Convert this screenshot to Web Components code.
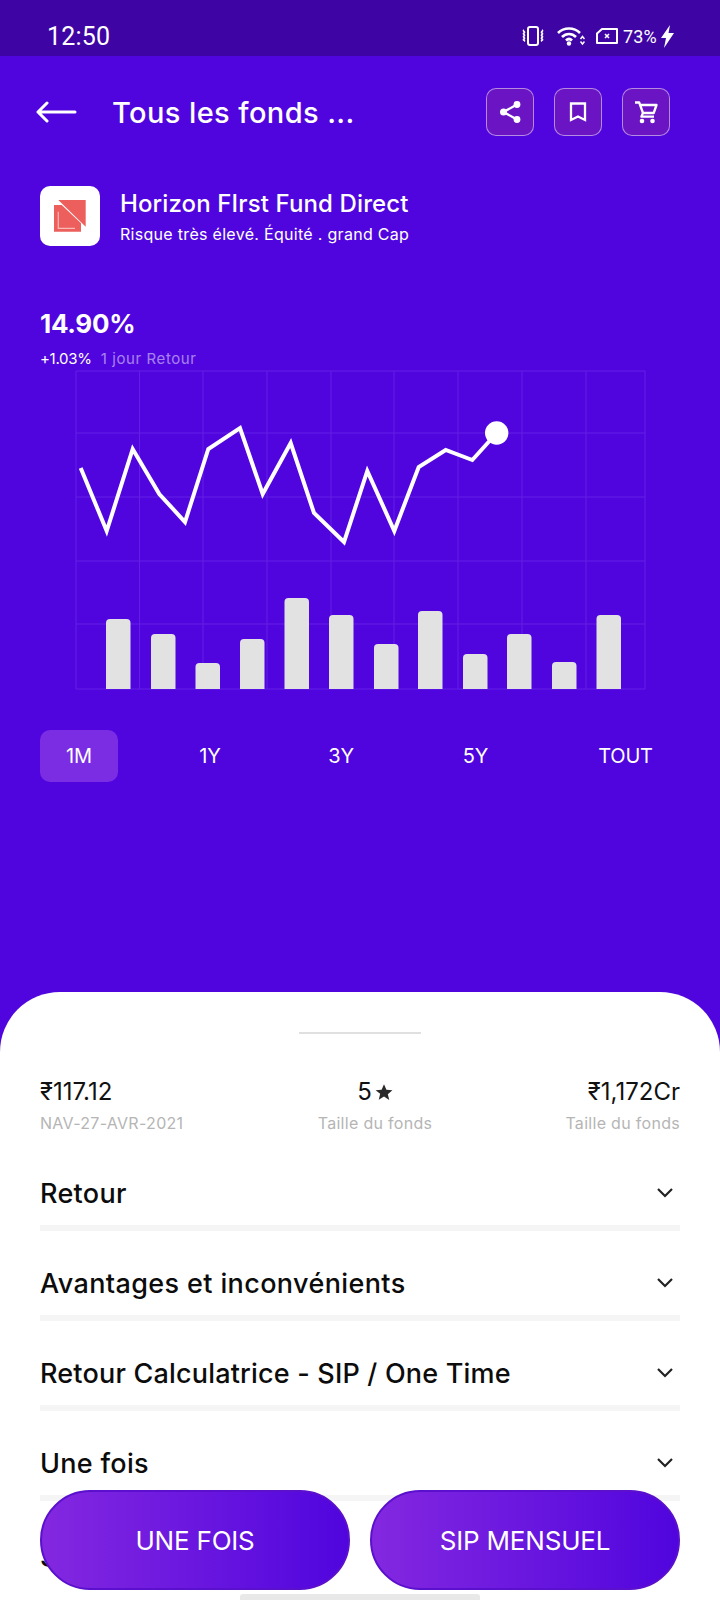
<!DOCTYPE html>
<html lang="fr">
<head>
<meta charset="utf-8">
<title>Horizon First Fund Direct</title>
<style>
  html, body { margin: 0; padding: 0; }
  body {
    width: 720px;
    height: 1600px;
    overflow: hidden;
    position: relative;
    display: flex;
    flex-direction: column;
    background: #5005de;
    font-family: Inter, "Noto Sans", sans-serif;
  }
</style>
</head>
<body>
  <status-bar></status-bar>
  <app-header title-text="Tous les fonds ...">
    <icon-button icon="share"></icon-button>
    <icon-button icon="bookmark"></icon-button>
    <icon-button icon="cart"></icon-button>
  </app-header>
  <fund-info name="Horizon FIrst Fund Direct" meta="Risque très élevé. Équité . grand Cap"></fund-info>
  <return-summary value="14.90%" change="+1.03%" label="1 jour Retour"></return-summary>
  <fund-chart></fund-chart>
  <range-tabs>
    <button slot="tab" aria-selected="true">1M</button>
    <button slot="tab">1Y</button>
    <button slot="tab">3Y</button>
    <button slot="tab">5Y</button>
    <button slot="tab">TOUT</button>
  </range-tabs>
  <detail-sheet>
    <stat-item slot="stats" value="₹117.12" label="NAV-27-AVR-2021"></stat-item>
    <stat-item slot="stats" value="5" star label="Taille du fonds" align="center"></stat-item>
    <stat-item slot="stats" value="₹1,172Cr" label="Taille du fonds" align="end"></stat-item>
    <accordion-row>Retour</accordion-row>
    <accordion-row style="letter-spacing:.38px">Avantages et inconvénients</accordion-row>
    <accordion-row style="letter-spacing:.19px">Retour Calculatrice - SIP / One Time</accordion-row>
    <accordion-row>Une fois</accordion-row>
    <accordion-row last>S</accordion-row>
  </detail-sheet>
  <cta-bar>
    <cta-button>UNE FOIS</cta-button>
    <cta-button>SIP MENSUEL</cta-button>
  </cta-bar>
  <gesture-bar></gesture-bar>

<script>
const ICONS = {
  share: `<circle cx="19" cy="4.500" r="3.400"/><circle cx="5.500" cy="12" r="3.500"/><circle cx="19" cy="19.500" r="3.400"/>
    <path d="M5.500 12 19 4.500M5.500 12 19 19.500" fill="none" stroke="#fff" stroke-width="2.400"/>`,
  bookmark: `<path d="M5 3.500h14v16.500l-7-3.500-7 3.500z" fill="none" stroke="#fff" stroke-width="2.300"/>`,
  cart: `<path d="M1 2.500h4.200L9 13l-1.600 3.600H20M5.500 5h17l-2.800 8H9" fill="none" stroke="#fff" stroke-width="2.300" stroke-linejoin="round"/>
    <circle cx="8" cy="21" r="2.300"/><circle cx="18.500" cy="21" r="2.300"/>`
}

customElements.define('status-bar', class extends HTMLElement {
  constructor() {
    super()
    this.attachShadow({ mode: 'open' }).innerHTML = `
    <style>
      :host {
        display: flex;
        align-items: center;
        flex: none;
        box-sizing: border-box;
        height: 56px;
        padding: 16px 45px 0 47px;
        background: #3e04a4;
        color: #fff;
        font-family: Roboto, sans-serif;
      }
      .time { font-size: 25px; letter-spacing: .2px; flex: 1; }
      .icons { display: flex; align-items: center; }
      svg { display: block; }
      .pct { font-size: 18px; margin: 0 3px 0 5px; letter-spacing: .2px; }
    </style>
    <span class="time">12:50</span>
    <div class="icons">
      <svg width="24" height="22" viewBox="0 0 24 22" fill="none" stroke="#fff" stroke-width="2">
        <rect x="7" y="2" width="10" height="18" rx="2"/>
        <path d="M3 5c-2 1 2 2 0 3s2 2 0 3 2 2 0 3 2 2 0 2M21 5c2 1-2 2 0 3s-2 2 0 3-2 2 0 3-2 2 0 2" stroke-width="1.600"/>
      </svg>
      <svg style="margin-left:12px" width="28" height="20" viewBox="0 0 28 20" fill="none" stroke="#fff" stroke-width="2.600">
        <path d="M1 7c6-6 16-6 22 0M5 11c4-4 10-4 14 0M9 14.500c2-2 4-2 6 0"/>
        <circle cx="12" cy="17.500" r="2.200" fill="#fff" stroke="none"/>
        <path d="M23.500 13l2-2.500 2 2.500M23.500 15.500l2 2.500 2-2.500" stroke-width="1.500"/>
      </svg>
      <svg style="margin-left:11px" width="22" height="16" viewBox="0 0 22 16" fill="none" stroke="#fff" stroke-width="2">
        <path d="M6 1h15v14H1V5.500z" stroke-linejoin="round"/>
        <path d="M9 6l4 4M13 6l-4 4" stroke-width="1.600"/>
      </svg>
      <span class="pct">73%</span>
      <svg width="15" height="23" viewBox="0 0 15 23"><path d="M10 0 1 13h5l-2 10 10-15H8.500z" fill="#fff"/></svg>
    </div>`
  }
})

customElements.define('app-header', class extends HTMLElement {
  constructor() {
    super()
    this.attachShadow({ mode: 'open' }).innerHTML = `
    <style>
      :host {
        display: flex;
        align-items: center;
        flex: none;
        height: 48px;
        padding: 32px 50px 0 36px;
        color: #fff;
      }
      svg { flex: none; display: block; }
      h1 {
        flex: 1;
        margin: 0 0 0 35px;
        font-size: 29px;
        font-weight: 500;
        letter-spacing: .4px;
      }
      .actions { display: flex; gap: 20px; }
    </style>
    <svg width="41" height="24" viewBox="0 0 41 24" fill="none" stroke="#fff" stroke-width="3" stroke-linecap="round" stroke-linejoin="round">
      <path d="M2 12h37M11 3 2 12l9 9"/>
    </svg>
    <h1>${this.getAttribute('title-text')}</h1>
    <div class="actions"><slot></slot></div>`
  }
})

customElements.define('icon-button', class extends HTMLElement {
  constructor() {
    super()
    this.attachShadow({ mode: 'open' }).innerHTML = `
    <style>
      :host {
        display: flex;
        align-items: center;
        justify-content: center;
        box-sizing: border-box;
        width: 48px;
        height: 48px;
        border: 1px solid rgba(255,255,255,.5);
        border-radius: 10px;
        background: #6b14c4;
      }
      svg { fill: #fff; display: block; }
    </style>
    <svg width="24" height="24" viewBox="0 0 24 24">${ICONS[this.getAttribute('icon')]}</svg>`
  }
})

customElements.define('fund-info', class extends HTMLElement {
  constructor() {
    super()
    this.attachShadow({ mode: 'open' }).innerHTML = `
    <style>
      :host {
        display: flex;
        align-items: center;
        flex: none;
        gap: 20px;
        margin: 50px 40px 0;
        color: #fff;
      }
      .logo {
        flex: none;
        display: flex;
        align-items: center;
        justify-content: center;
        width: 60px;
        height: 60px;
        border-radius: 10px;
        background: #fff;
      }
      svg { display: block; }
      .text { padding-top: 1px; }
      .name { font-size: 24px; font-weight: 500; line-height: 34px; letter-spacing: .12px; }
      .meta { font-size: 16px; line-height: 24px; margin-top: 1px; letter-spacing: .3px; }
    </style>
    <div class="logo">
      <svg width="32" height="32" viewBox="0 0 32 32">
        <path d="M4.300 0H31.700V26.700z" fill="#ec5f5c"/>
        <path d="M0 5H7.700L27 23.300V31.700H0z" fill="#ec5f5c"/>
        <path d="M4.300 11.700V28.300H21" fill="none" stroke="#f8b9b7" stroke-width="1.200"/>
      </svg>
    </div>
    <div class="text">
      <div class="name">${this.getAttribute('name')}</div>
      <div class="meta">${this.getAttribute('meta')}</div>
    </div>`
  }
})

customElements.define('return-summary', class extends HTMLElement {
  constructor() {
    super()
    this.attachShadow({ mode: 'open' }).innerHTML = `
    <style>
      :host {
        display: block;
        flex: none;
        margin: 60px 40px 0;
        color: #fff;
      }
      .value { font-size: 26px; font-weight: 700; line-height: 36px; letter-spacing: -.3px; }
      .sub { font-size: 15px; line-height: 20px; margin-top: 7px; display: flex; gap: 9px; }
      .sub span:first-child { letter-spacing: -.3px; }
      .sub span:last-child { color: rgba(255,255,255,.5); letter-spacing: .6px; }
    </style>
    <div class="value">${this.getAttribute('value')}</div>
    <div class="sub"><span>${this.getAttribute('change')}</span><span>${this.getAttribute('label')}</span></div>`
  }
})

customElements.define('fund-chart', class extends HTMLElement {
  constructor() {
    super()
    const xs = [76, 139.500, 203, 267, 331, 394, 458, 522, 586, 645]
    const ys = [371, 433, 497, 561, 624, 689]
    const bars = [
      [106, 619], [151, 634], [195.500, 663], [240, 639], [284.500, 598], [329, 615],
      [374, 644], [418, 611], [463, 654], [507, 634], [552, 662], [596.500, 615]
    ]
    const line = '80.700,468 106.700,531 132.700,449 159.300,494 185,522 208.300,449 240,428 262.700,494 290.700,443 314,513 344,542 367.300,471 394.300,531 418.700,467 445.700,450 472.300,460 496.700,433'
    const offsetY = 365
    const grid = [
      ...xs.map(x => `<path d="M${x} ${ys[0] - offsetY}V${ys[5] - offsetY}"/>`),
      ...ys.map(y => `<path d="M${xs[0]} ${y - offsetY}H${xs[9]}"/>`)
    ].join('')
    const barEls = bars.map(([x, top]) =>
      `<path d="M${x} 324V${top - offsetY + 4}q0-4 4-4h16.500q4 0 4 4V324z"/>`).join('')
    const shifted = line.split(' ').map(p => {
      const [x, y] = p.split(',')
      return `${x},${y - offsetY}`
    }).join(' ')
    this.attachShadow({ mode: 'open' }).innerHTML = `
    <style>
      :host { display: block; flex: none; height: 330px; margin-top: -4px; }
      svg { display: block; }
    </style>
    <svg width="720" height="330" viewBox="0 0 720 330">
      <g stroke="#6320e4" stroke-width="1" fill="none">${grid}</g>
      <g fill="#e2e2e2">${barEls}</g>
      <polyline points="${shifted}" fill="none" stroke="#fff" stroke-width="4" stroke-linejoin="miter"/>
      <circle cx="496.700" cy="68" r="11.700" fill="#fff"/>
    </svg>`
  }
})

customElements.define('range-tabs', class extends HTMLElement {
  constructor() {
    super()
    this.attachShadow({ mode: 'open' }).innerHTML = `
    <style>
      :host {
        display: grid;
        flex: none;
        grid-template-columns: 78px 72px 78px 79px 109px;
        column-gap: 56px;
        height: 52px;
        margin: 35px 0 0 40px;
      }
      ::slotted(button) {
        padding: 0;
        border: none;
        border-radius: 10px;
        background: none;
        color: #fff;
        font: 400 20px Inter, sans-serif;
        letter-spacing: -.2px;
      }
      ::slotted([aria-selected="true"]) { background: #7b2de4; }
    </style>
    <slot name="tab"></slot>`
  }
})

customElements.define('detail-sheet', class extends HTMLElement {
  constructor() {
    super()
    this.attachShadow({ mode: 'open' }).innerHTML = `
    <style>
      :host {
        display: block;
        flex: none;
        box-sizing: border-box;
        height: 608px;
        margin-top: 210px;
        padding: 40px 40px 0;
        border-radius: 60px 60px 0 0;
        background: #fff;
        overflow: hidden;
      }
      .handle { width: 122px; height: 2px; margin: 0 auto; background: #e0e0e0; }
      .stats {
        display: grid;
        grid-template-columns: 145px 115px 115px;
        justify-content: space-between;
        margin-top: 40px;
        margin-bottom: 7px;
      }
    </style>
    <div class="handle"></div>
    <div class="stats"><slot name="stats"></slot></div>
    <slot></slot>`
  }
})

customElements.define('stat-item', class extends HTMLElement {
  constructor() {
    super()
    const align = this.getAttribute('align') || 'start'
    const star = this.hasAttribute('star')
      ? '<svg width="18" height="18" viewBox="0 0 24 24"><path d="M12 1.500l3.200 7.400 8 .7-6.100 5.300 1.900 7.900L12 18.100 5 22.300l1.900-7.900L.8 9.600l8-.7z" fill="#2a2a2a"/></svg>'
      : ''
    this.attachShadow({ mode: 'open' }).innerHTML = `
    <style>
      :host { display: flex; flex-direction: column; align-items: ${align}; white-space: nowrap; }
      .value { display: flex; align-items: center; gap: 3px; font-size: 24px; line-height: 36px; color: #111; }
      .label { font-size: 16px; line-height: 22px; margin-top: 2px; color: #b5b5b5; letter-spacing: .3px; }
    </style>
    <div class="value">${this.getAttribute('value')}${star}</div>
    <div class="label">${this.getAttribute('label')}</div>`
  }
})

customElements.define('accordion-row', class extends HTMLElement {
  constructor() {
    super()
    const border = this.hasAttribute('last') ? 'none' : '6px solid #f5f5f5'
    this.attachShadow({ mode: 'open' }).innerHTML = `
    <style>
      :host {
        display: flex;
        align-items: center;
        justify-content: space-between;
        box-sizing: border-box;
        height: 90px;
        padding: 20px 6px 0 0;
        border-bottom: ${border};
        font-size: 27px;
        font-weight: 500;
        letter-spacing: .3px;
        color: #0c0c0c;
      }
      svg { display: block; }
    </style>
    <span><slot></slot></span>
    <svg width="18" height="12" viewBox="0 0 18 12" fill="none" stroke="#222" stroke-width="2.200">
      <path d="M2 2l7 7 7-7"/>
    </svg>`
  }
})

customElements.define('cta-bar', class extends HTMLElement {
  constructor() {
    super()
    this.attachShadow({ mode: 'open' }).innerHTML = `
    <style>
      :host {
        position: absolute;
        left: 40px;
        right: 40px;
        top: 1490px;
        display: grid;
        grid-template-columns: 1fr 1fr;
        gap: 20px;
      }
    </style>
    <slot></slot>`
  }
})

customElements.define('cta-button', class extends HTMLElement {
  constructor() {
    super()
    this.attachShadow({ mode: 'open' }).innerHTML = `
    <style>
      :host {
        display: flex;
        align-items: center;
        justify-content: center;
        box-sizing: border-box;
        height: 100px;
        border: 2px solid #5a10cc;
        border-radius: 50px;
        background: linear-gradient(90deg, #8428e0, #5005de);
        color: #fff;
        font-size: 26px;
        letter-spacing: -.2px;
      }
    </style>
    <slot></slot>`
  }
})

customElements.define('gesture-bar', class extends HTMLElement {
  constructor() {
    super()
    this.attachShadow({ mode: 'open' }).innerHTML = `
    <style>
      :host {
        position: absolute;
        left: 240px;
        top: 1594px;
        width: 240px;
        height: 6px;
        border-radius: 3px 3px 0 0;
        background: #e8e8e8;
      }
    </style>`
  }
})
</script>
</body>
</html>
